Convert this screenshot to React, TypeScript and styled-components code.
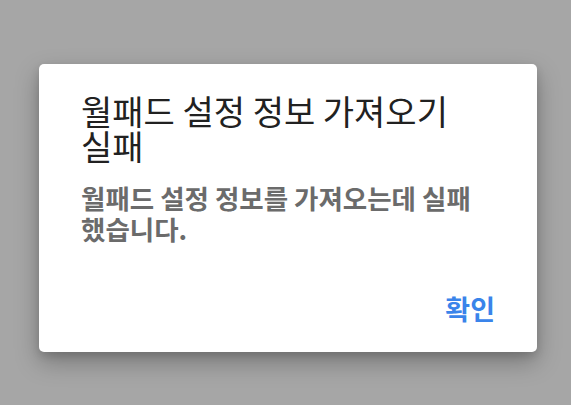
import React from "react";
import styled, { createGlobalStyle } from "styled-components";

const GlobalStyle = createGlobalStyle`
  html, body {
    margin: 0;
    padding: 0;
    background: #a6a6a6;
  }
  body {
    font-family: "Noto Sans CJK KR", "Noto Sans", sans-serif;
  }
`;

const Backdrop = styled.div`
  width: 571px;
  height: 405px;
  box-sizing: border-box;
  padding: 64px 0 0 39px;
  background: #a6a6a6;
`;

const Dialog = styled.div`
  width: 498px;
  height: 288px;
  box-sizing: border-box;
  background: #ffffff;
  border-radius: 5px;
  box-shadow: 0 10px 24px rgba(0, 0, 0, 0.28), 0 4px 8px rgba(0, 0, 0, 0.12);
  padding: 29px 42px 27px 42px;
  display: flex;
  flex-direction: column;
`;

const Title = styled.h2`
  margin: 0;
  font-size: 34px;
  line-height: 35px;
  font-weight: 400;
  color: #212121;
  word-break: keep-all;
`;

const Message = styled.p`
  margin: 19px 0 0;
  font-size: 26.5px;
  line-height: 31px;
  font-weight: 700;
  color: #6b6b6b;
`;

const Actions = styled.div`
  margin-top: auto;
  display: flex;
  justify-content: flex-end;
`;

const TextButton = styled.button`
  border: none;
  background: transparent;
  padding: 0;
  font-family: inherit;
  font-size: 27px;
  line-height: 32px;
  font-weight: 700;
  color: #3a84ea;
  cursor: pointer;
`;

export default function App() {
  return (
    <>
      <GlobalStyle />
      <Backdrop>
        <Dialog>
          <Title>월패드 설정 정보 가져오기 실패</Title>
          <Message>월패드 설정 정보를 가져오는데 실패했습니다.</Message>
          <Actions>
            <TextButton>확인</TextButton>
          </Actions>
        </Dialog>
      </Backdrop>
    </>
  );
}
